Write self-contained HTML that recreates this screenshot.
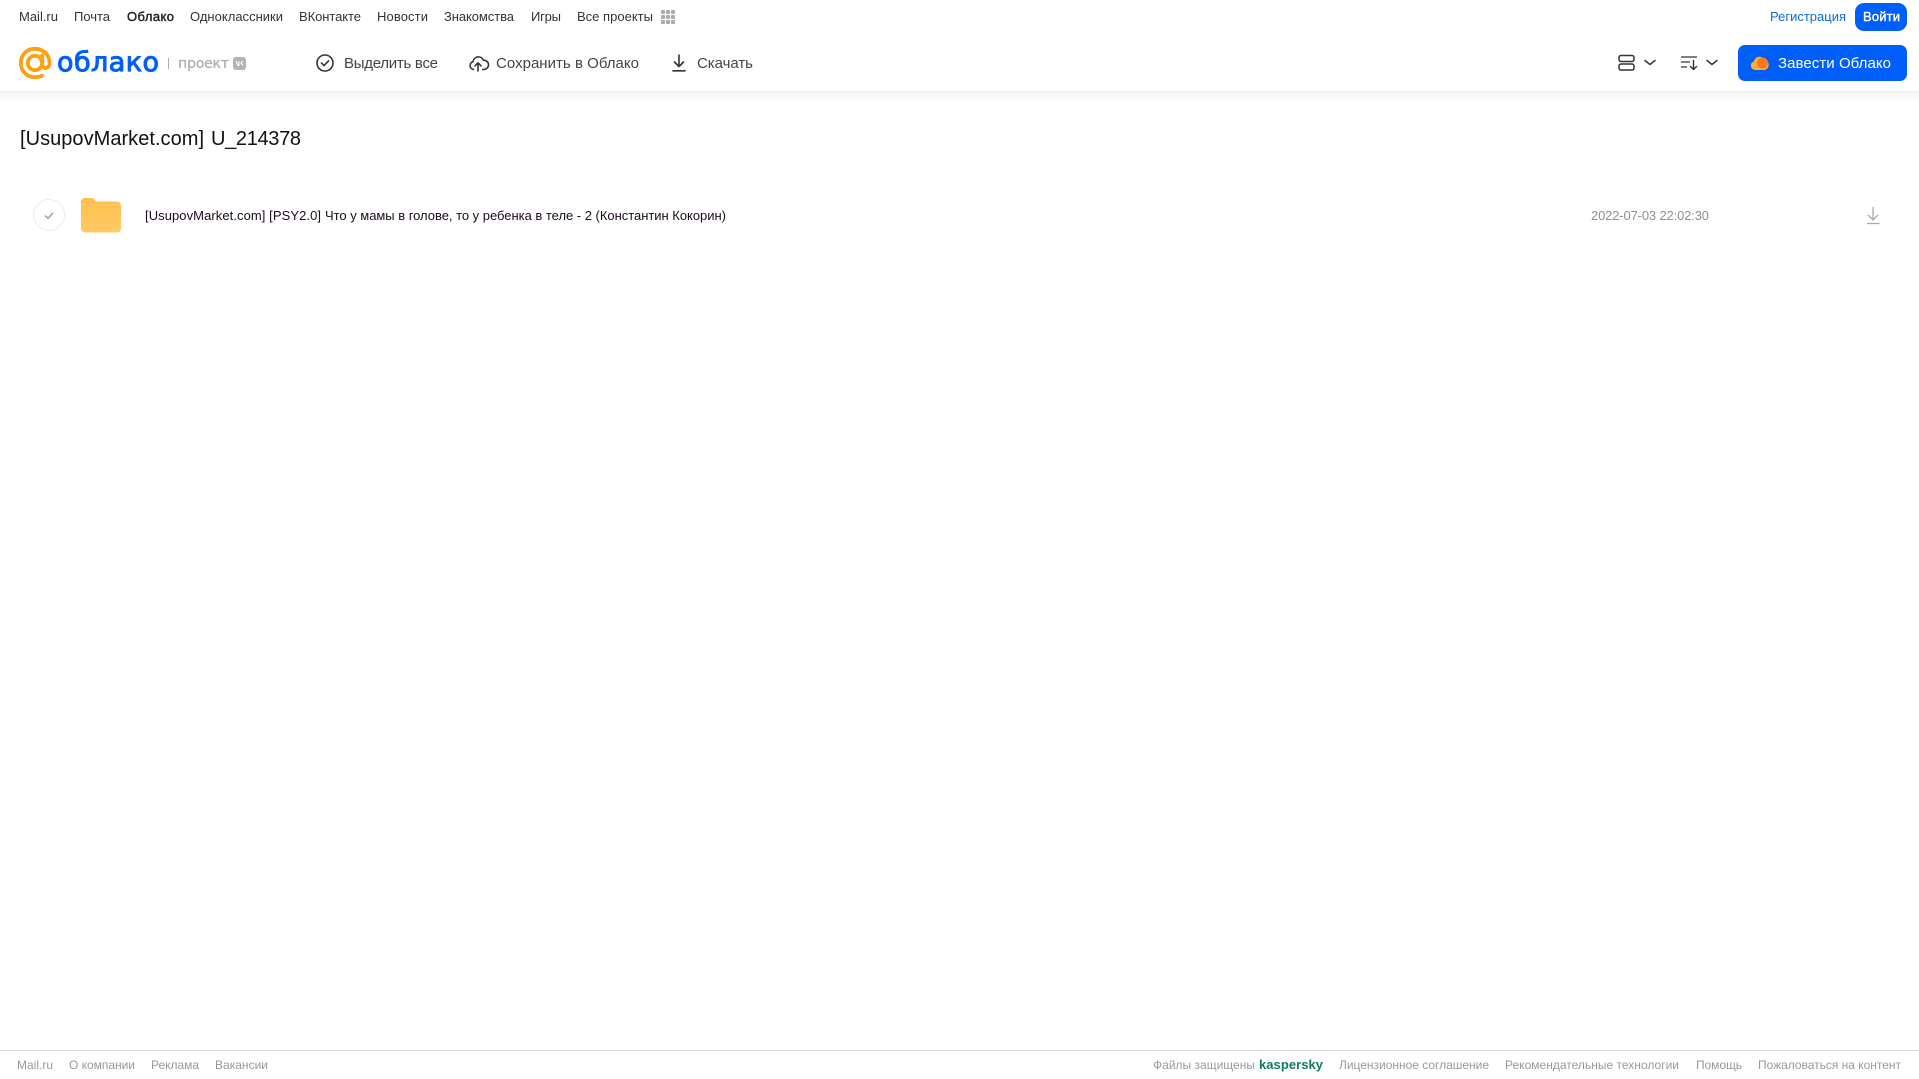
<!DOCTYPE html>
<html lang="ru"><head><meta charset="utf-8"><title>Облако</title>
<style>
html,body{margin:0;padding:0;background:#fff;overflow:hidden}
svg{display:block}
text{font-family:"Liberation Sans",sans-serif;white-space:pre}
.n{font-size:13px;fill:#333}
.a{font-size:15px;fill:#444}
.f{font-size:12px;fill:#999}
</style></head><body>
<svg width="1919" height="1079" viewBox="0 0 1919 1079" xmlns="http://www.w3.org/2000/svg">
<defs>
<linearGradient id="sh" x1="0" y1="0" x2="0" y2="1"><stop offset="0" stop-color="#f3f3f3"/><stop offset="1" stop-color="#fff"/></linearGradient>
<linearGradient id="fo" x1="0" y1="0" x2="0" y2="1"><stop offset="0" stop-color="#ffbe4a"/><stop offset="1" stop-color="#ffcb66"/></linearGradient>
</defs>
<rect width="1919" height="1079" fill="#fff"/>
<rect x="0" y="91" width="1919" height="12" fill="url(#sh)"/>

<!-- top nav -->
<text class="n" x="19" y="21" textLength="39">Mail.ru</text>
<text class="n" x="74" y="21" textLength="36">Почта</text>
<text class="n" x="127" y="21" textLength="47" style="fill:#222;stroke:#222;stroke-width:.4">Облако</text>
<text class="n" x="190" y="21" textLength="93">Одноклассники</text>
<text class="n" x="299" y="21" textLength="62">ВКонтакте</text>
<text class="n" x="377" y="21" textLength="51">Новости</text>
<text class="n" x="444" y="21" textLength="70">Знакомства</text>
<text class="n" x="531" y="21" textLength="30">Игры</text>
<text class="n" x="577" y="21" textLength="76">Все проекты</text>
<g fill="#aaa">
<rect x="661" y="10" width="4" height="4" rx="1"/><rect x="666" y="10" width="4" height="4" rx="1"/><rect x="671" y="10" width="4" height="4" rx="1"/>
<rect x="661" y="15" width="4" height="4" rx="1"/><rect x="666" y="15" width="4" height="4" rx="1"/><rect x="671" y="15" width="4" height="4" rx="1"/>
<rect x="661" y="20" width="4" height="4" rx="1"/><rect x="666" y="20" width="4" height="4" rx="1"/><rect x="671" y="20" width="4" height="4" rx="1"/>
</g>
<text x="1770" y="21" font-size="13" fill="#0a6cdc" textLength="76">Регистрация</text>
<rect x="1855" y="3" width="52" height="28" rx="9" fill="#005ff9"/>
<text x="1863" y="21" font-size="13" fill="#fff" stroke="#fff" stroke-width=".4" textLength="37">Войти</text>

<!-- logo -->
<g fill="none" stroke="#ffa00f" stroke-width="3.8">
<circle cx="35" cy="63" r="7.200"/>
<path d="M42.200 55.500v9c0 5 7.300 5 7.300-1.500 0-8-6-14.200-14.500-14.200S20.800 55 20.800 63 27 77.200 35 77.200c3 0 5-.5 7-1.500" stroke-linecap="round"/>
</g>
<text x="57" y="71" font-size="27" fill="#005ff9" textLength="102" style="font-family:'DejaVu Sans',sans-serif;stroke:#005ff9;stroke-width:1">облако</text>
<rect x="168" y="58" width="1" height="11" fill="#aaa"/>
<text x="178" y="68" font-size="14" fill="#b0b0b0" textLength="51" style="font-family:'DejaVu Sans',sans-serif;stroke:#b0b0b0;stroke-width:.35">проект</text>
<rect x="233" y="57" width="13" height="13" rx="3" fill="#b3b3b3"/>
<path d="M236 61l2 4.500h1v-4.500M243 61l-2 2 2 2.500" fill="none" stroke="#fff" stroke-width="1.100"/>

<!-- actions -->
<g fill="none" stroke="#333" stroke-width="1.600" stroke-linecap="round" stroke-linejoin="round">
<circle cx="325" cy="63" r="8"/>
<path d="M321.500 63l2.600 2.600 4.500-4.800"/>
<path d="M473.500 69.500a4 4 0 0 1-.5-7.800 5.500 5.500 0 0 1 10.500-1.500 4.600 4.600 0 0 1 .8 9.200h-1.500"/>
<path d="M478 71v-8M475 65.800l3-3 3 3"/>
<path d="M679 55v11.500M674.500 62l4.500 4.500 4.500-4.500"/>
<path d="M673 70.800h12" stroke-width="1.700"/>
</g>
<text class="a" x="344" y="68" textLength="94">Выделить все</text>
<text class="a" x="496" y="68" textLength="143">Сохранить в Облако</text>
<text class="a" x="697" y="68" textLength="56">Скачать</text>

<!-- view / sort -->
<g fill="none" stroke="#333" stroke-width="1.500" stroke-linecap="round" stroke-linejoin="round">
<rect x="1619" y="55.500" width="15" height="6" rx="2"/>
<rect x="1619" y="64" width="15" height="6" rx="2"/>
<path d="M1645 60.500l5 4 5-4"/>
<path d="M1681.500 57h15M1681.500 62h8M1681.500 67h5" stroke-width="1.300"/>
<path d="M1693.500 60.500v9M1690.500 66.500l3 3 3-3" stroke-width="1.400"/>
<path d="M1707 60.500l5 4 5-4"/>
</g>

<!-- CTA -->
<rect x="1738" y="45" width="169" height="36" rx="7" fill="#005ff9"/>
<path d="M1755 70a4.500 4.500 0 0 1-1-8.800 5.500 5.500 0 0 1 10-2 5.500 5.500 0 0 1 .5 10.800z" fill="#ffb02e"/>
<circle cx="1762.500" cy="63" r="5.500" fill="#ff7a1f"/>
<text x="1778" y="68" font-size="15" fill="#fff" textLength="113">Завести Облако</text>

<!-- title -->
<text x="20" y="145" font-size="20" fill="#111" textLength="184">[UsupovMarket.com]</text>
<text x="211" y="145" font-size="20" fill="#111" textLength="90">U_214378</text>

<!-- row -->
<circle cx="49" cy="215" r="15.500" fill="#fff" stroke="#ececec"/>
<path d="M45 215.500l3 2.800 5-5.300" fill="none" stroke="#999" stroke-width="1.400"/>
<path d="M81 201a4 4 0 0 1 4-3h6c2 0 3 .7 4 2.200l1 1.300h21a4 4 0 0 1 4 4V229a4 4 0 0 1-4 3.500H85a4 4 0 0 1-4-3.500z" fill="url(#fo)"/>
<rect x="81" y="204" width="40" height="1" fill="#ffd27a" opacity=".6"/>
<text x="145" y="220" font-size="13" fill="#1c0a1f" textLength="176">[UsupovMarket.com] [PSY2.0]</text>
<text x="325" y="220" font-size="13" fill="#1c0a1f" textLength="401">Что у мамы в голове, то у ребенка в теле - 2 (Константин Кокорин)</text>
<text x="1591" y="220" font-size="13" fill="#8f8f8f" textLength="118">2022-07-03 22:02:30</text>
<g fill="none" stroke="#a8a8a8" stroke-width="1.300">
<path d="M1873 207v13M1868 215l5 5 5-5"/>
<path d="M1867 223.500h12.500"/>
</g>

<!-- footer -->
<rect x="0" y="1050" width="1919" height="1" fill="#d8d8d8"/>
<text class="f" x="17" y="1069" textLength="36">Mail.ru</text>
<text class="f" x="69" y="1069" textLength="66">О компании</text>
<text class="f" x="151" y="1069" textLength="48">Реклама</text>
<text class="f" x="215" y="1069" textLength="53">Вакансии</text>
<text class="f" x="1153" y="1069" textLength="102">Файлы защищены</text>
<text x="1259" y="1069" font-size="13" font-weight="700" fill="#107a63" textLength="64">kaspersky</text>
<text class="f" x="1339" y="1069" textLength="150">Лицензионное соглашение</text>
<text class="f" x="1505" y="1069" textLength="174">Рекомендательные технологии</text>
<text class="f" x="1696" y="1069" textLength="46">Помощь</text>
<text class="f" x="1758" y="1069" textLength="143">Пожаловаться на контент</text>
</svg>
</body></html>
